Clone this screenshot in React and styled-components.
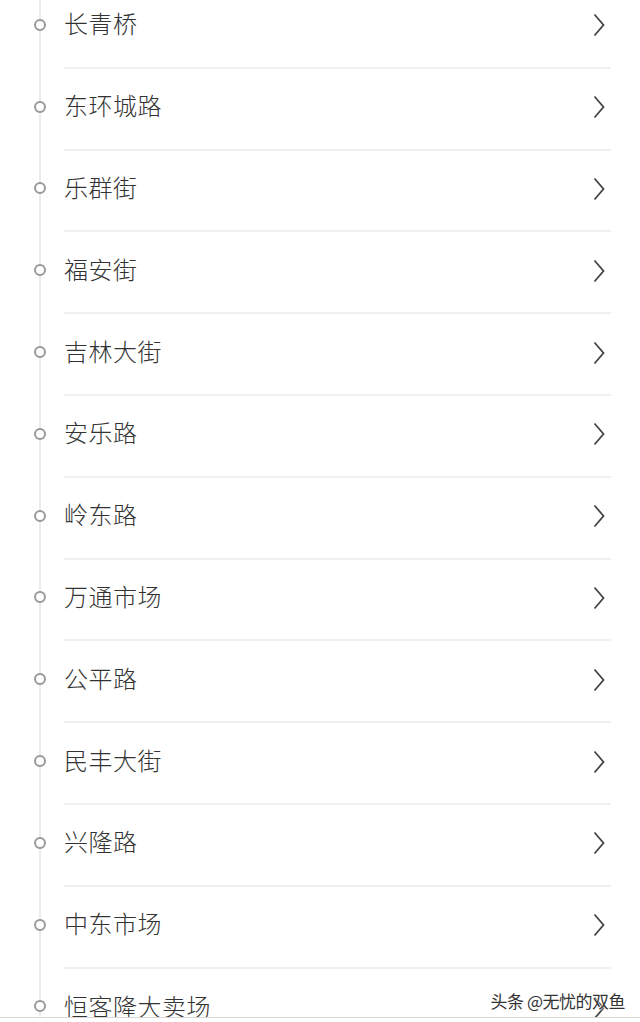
import React from "react";
import styled, { createGlobalStyle } from "styled-components";

const Global = createGlobalStyle`
  html, body { margin: 0; padding: 0; background: #fff; }
  body { width: 640px; height: 1022px; overflow: hidden; font-family: "Noto Sans CJK SC", "Noto Sans", sans-serif; }
`;

const Page = styled.div`
  position: relative;
  width: 640px;
  height: 1022px;
  overflow: hidden;
  background: #fff;
`;

const List = styled.ul`
  position: relative;
  list-style: none;
  margin: -13px 0 0 0;
  padding: 0;
  &::before {
    content: "";
    position: absolute;
    left: 39px;
    top: 0;
    bottom: 0;
    width: 2px;
    background: #ececec;
  }
`;

const Row = styled.li`
  position: relative;
  display: flex;
  align-items: center;
  height: 81.8px;
  padding-left: 64px;
  padding-right: 29px;
`;

const Dot = styled.span`
  position: absolute;
  left: 34px;
  top: 50%;
  margin-top: -9px;
  width: 8px;
  height: 8px;
  border: 2px solid #9a9a9a;
  border-radius: 50%;
  background: #fff;
`;

const Body = styled.div`
  flex: 1;
  height: 100%;
  display: flex;
  align-items: center;
  justify-content: space-between;
  border-bottom: ${(p) => (p.$last ? "none" : "2px solid #f0f0f0")};
  box-sizing: border-box;
  padding-bottom: 3px;
`;

const Name = styled.span`
  font-size: 24px;
  font-weight: 300;
  color: #333;
  letter-spacing: 0.5px;
  line-height: 1;
  margin-top: -4px;
`;

const Chevron = styled.svg`
  width: 12px;
  height: 24px;
  margin-right: 6px;
  margin-top: 0px;
  flex: none;
`;

const BottomBar = styled.div`
  position: absolute;
  left: 0;
  right: 0;
  bottom: 0;
  height: 4px;
  background: #fff;
  border-top: 1px solid #d8d8d8;
`;

const Watermark = styled.div`
  position: absolute;
  right: 15px;
  bottom: 9px;
  font-size: 17px;
  color: #333;
  font-family: "Noto Sans CJK SC", sans-serif;
  text-shadow: 0 0 2px #fff, 0 0 2px #fff;
  letter-spacing: -0.5px;
`;

const stops = [
  "长青桥",
  "东环城路",
  "乐群街",
  "福安街",
  "吉林大街",
  "安乐路",
  "岭东路",
  "万通市场",
  "公平路",
  "民丰大街",
  "兴隆路",
  "中东市场",
  "恒客隆大卖场",
];

export default function App() {
  return (
    <Page>
      <Global />
      <List>
        {stops.map((s, i) => (
          <Row key={s}>
            <Dot />
            <Body $last={i === stops.length - 1}>
              <Name>{s}</Name>
              <Chevron viewBox="0 0 12 24">
                <path d="M1.5 1.5 L10.5 12 L1.5 22.5" fill="none" stroke="#444" strokeWidth="1.8" />
              </Chevron>
            </Body>
          </Row>
        ))}
      </List>
      <BottomBar />
      <Watermark>头条 @无忧的双鱼</Watermark>
    </Page>
  );
}
